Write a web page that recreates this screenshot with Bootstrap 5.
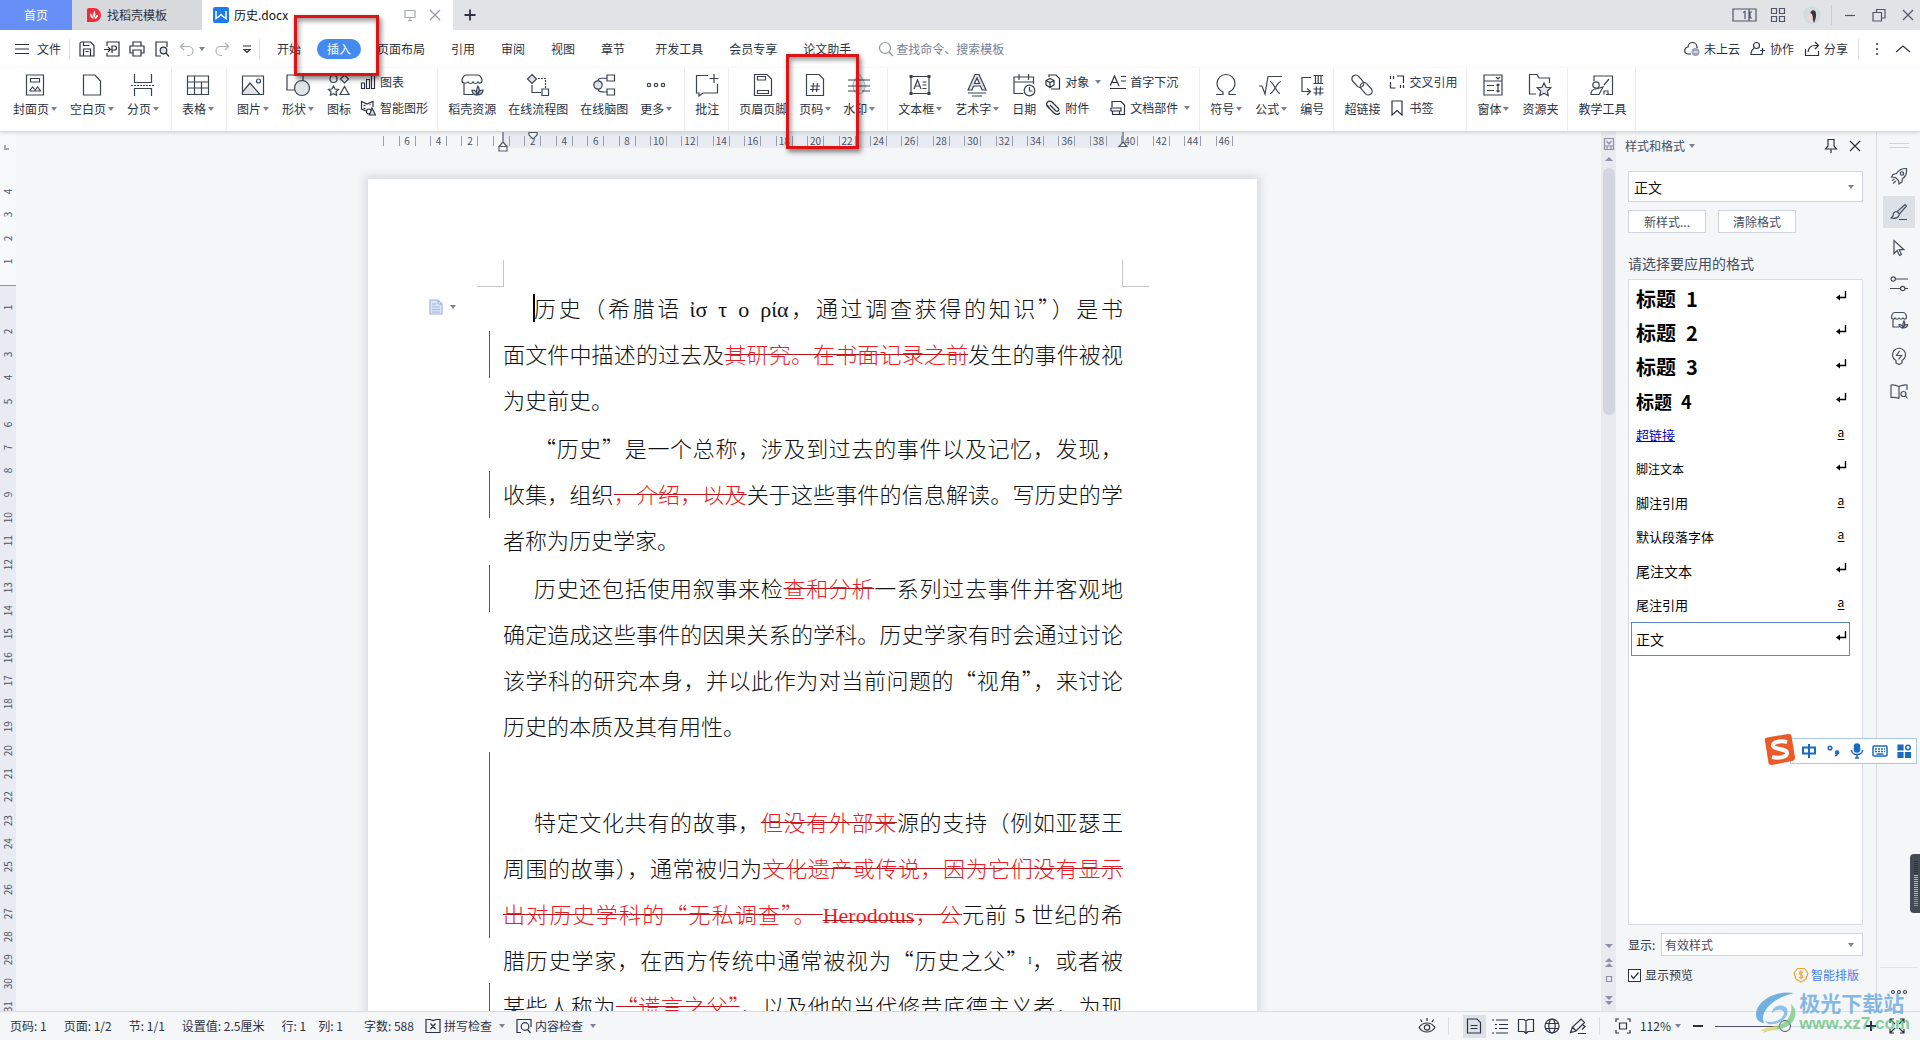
<!DOCTYPE html>
<html lang="zh-CN">
<head>
<meta charset="utf-8">
<meta name="viewport" content="width=device-width, initial-scale=1">
<title>历史.docx</title>
<link href="https://cdn.jsdelivr.net/npm/bootstrap@5.3.0/dist/css/bootstrap.min.css" rel="stylesheet">
<style>
  :root { --ink:#2a3244; --dim:#5d677d; --line:#d9dce2; --pane:#f5f6f8; }
  body { font-family:"Noto Sans CJK SC",sans-serif; font-size:12px; line-height:16px; color:var(--ink); background:var(--pane); height:100vh; overflow:hidden; }
  svg { display:block; flex:none; fill:none; }
  svg:not([stroke]) { stroke:currentColor; }
  svg:not([stroke-width]) { stroke-width:1.2; }
  .i24 { width:24px; height:24px; } .i18 { width:18px; height:18px; } .i16 { width:16px; height:16px; }
  button { background:none; border:0; padding:0; color:inherit; white-space:nowrap; }
  a.plain { color:inherit; text-decoration:none; white-space:nowrap; }
  .tri { display:inline-block; border:3px solid transparent; border-top:4px solid #7b8294; border-bottom:0; flex:none; }
  .vline { width:1px; height:20px; background:#dcdfe5; flex:none; }

  .tabstrip { height:30px; background:#e1e3e7; }
  .tab-home { width:72px; background:#6690f8; color:#fff; }
  .tab-shop { width:130px; background:#d7d9dc; padding-left:14px; gap:5px; }
  .tab-doc { width:251px; background:#fff; padding:0 10px 0 11px; gap:5px; color:#111; }
  .tab-add { width:20px; }
  .win { gap:13px; padding-right:4px; color:#4d576c; }
  .win .vline { margin:0 -3px; background:#c9ccd3; }

  .menubar { height:38px; background:#fff; padding:0 9px 0 15px; }
  .quick { gap:9px; margin-left:9px; }
  .menus { gap:26px; margin-left:17px; }
  .menus .on { background:#438bf0; color:#fff; border-radius:10px; padding:2px 10px; margin:0 -10px; }
  .find { gap:2px; margin-left:27px; color:#8a94a8; }
  .find input { border:0; outline:0; width:140px; padding:0; background:none; color:inherit; }
  .find input::placeholder { color:#75819b; opacity:1; }
  .account { gap:10px; }

  .ribbon { height:64px; background:#fff; border-bottom:1px solid #d8dade; box-shadow:0 1px 3px rgba(60,70,90,.18); z-index:2; padding-left:3px; position:relative; }
  .grp { padding:0 9px 0 10px; gap:13px; border-right:1px solid #edeef1; flex:none; }
  .grp.tight { gap:12px; }
  .grp.wide { padding-right:12px; }
  .big { display:flex; flex-direction:column; align-items:center; gap:4px; padding-top:5px; height:62px; }
  .big svg { color:#3b4252; }
  .big .cap { display:flex; align-items:center; gap:2px; }
  .stack { display:flex; flex-direction:column; padding-top:1px; margin-left:-4px; }
  .stack button { display:flex; align-items:center; height:26px; gap:4px; }
  .stack .tri { margin-left:2px; }

  .vruler { width:16px; flex:none; position:relative; color:#4d5566; background:linear-gradient(#f8f9fb 153px,#8b93a1 153px,#8b93a1 154px,#e8ebf1 154px); font-size:10px; overflow:hidden; }
  .vruler .nums { display:flex; flex-direction:column; height:838px; margin-top:48px; }
  .vruler .corner { position:absolute; left:4px; top:13px; width:5px; height:5px; border:solid #a5aab3; border-width:0 0 2px 2px; }
  .vruler .nums span { flex:1 1 0; display:flex; align-items:center; justify-content:center; writing-mode:vertical-rl; transform:rotate(180deg); line-height:12px; }
  .canvas { padding-left:8px; overflow:hidden; min-width:0; }
  .sheetcol { width:889px; flex:none; }
  .hruler { display:flex; width:880px; height:16px; margin-left:-8px; font-size:10px; line-height:14px; color:#4d5566; background:linear-gradient(90deg,transparent 143px,#e8ebf1 143px,#e8ebf1 762px,transparent 762px); position:relative; }
  .hruler span { flex:1 1 0; display:flex; justify-content:center; }
  .hruler b { font-weight:400; width:17px; height:10px; line-height:9px; margin-top:4px; text-align:center; border:solid #98a0ae; border-width:0 1px; }
  .hruler .edge b { border-left-color:transparent; }
  .mk { position:absolute; width:12px; height:20px; color:#555d6d; }
  .mk.l { left:137px; top:0; } .mk.f { left:167px; top:0; } .mk.r { left:757px; top:0; }
  .hruler svg { fill:#fff; }

  .sheet { background:#fff; margin-top:31px; padding:105px 134px 0 135px; box-shadow:0 0 9px 3px rgba(90,100,120,.2); position:relative; height:1100px; }
  .crop { position:absolute; top:81px; width:27px; height:27px; border:solid #c3c5c9; border-width:0 0 1px 0; }
  .crop.l { left:109px; border-right-width:1px; } .crop.r { right:108px; border-left-width:1px; }
  .pastetip { position:absolute; left:60px; top:120px; display:flex; align-items:center; gap:6px; color:#9db4dc; }
  .doc-par { margin:0 0 2px; min-height:46px; }
  .doc-line { display:block; position:relative; line-height:46px; font-family:"Noto Sans CJK SC",serif; font-weight:300; font-size:22px; color:#111; white-space:nowrap; text-align:justify; text-align-last:justify; }
  .doc-line.first { padding-left:31px; } .doc-line.end { text-align-last:left; }
  .doc-line.chg::before { content:""; position:absolute; left:-14px; top:1px; bottom:-2px; width:1px; background:#c8232c; }
  .doc-line.span5::before { top:-46px; }
  .doc-line i { font-family:"Liberation Serif",serif; font-style:normal; line-height:0; }
  .doc-line sup { font-family:"Liberation Serif",serif; font-size:10px; line-height:0; }
  del { color:#ee1c24; text-decoration:line-through 1px #b8141c; }
  .textcur { position:absolute; left:30px; top:10px; width:2px; height:28px; background:#000; }

  .scroll { width:15px; background:#e8eaef; flex:none; align-items:center; color:#8b92a5; }
  .scroll .thumb { width:12px; height:247px; border-radius:6px; background:#d2d6dd; margin-top:7px; }

  .stylepane { width:261px; flex:none; padding:5px 13px 0 12px; border-right:1px solid var(--line); }
  .stylepane h2 { font-size:12px; line-height:18px; margin:0 0 0 -3px; font-weight:400; color:#434d63; }
  .pick { position:relative; }
  .pick select { width:100%; appearance:none; border:1px solid #d0d4dc; background:#fff; border-radius:0; padding:0 5px; color:#111; display:block; }
  .pick .tri { position:absolute; right:9px; top:50%; margin-top:-2px; }
  .pick.top select { height:31px; font-size:14px; }
  .pick.low select { height:23px; color:#434d63; padding:0 3px; }
  .minor { width:78px; height:23px; background:#fff; border:1px solid #d0d4dc; color:#434d63; }
  .hint { font-size:14px; line-height:20px; margin:20px 0 6px; color:#434d63; }
  .stylebox { border:1px solid #d9dce2; background:#fff; padding:2px 12px 0 2px; color:#000; min-height:0; }
  .stylebox li { height:34px; display:flex; align-items:center; padding:0 2px 0 4px; font-size:13px; border:1px solid transparent; }
  .stylebox li > u, .stylebox li > svg { margin:0 0 7px auto; width:12px; text-align:center; font-size:12px; line-height:12px; text-underline-offset:2px; }
  .stylebox .h { font-weight:700; font-size:20px; line-height:28px; } .stylebox .h4s { font-size:18px; }
  .stylebox .t12 { font-size:12px; } .stylebox .t14 { font-size:14px; }
  .stylebox .sel { border-color:#5b8cc4; }
  .stylebox a { color:#0000c8; }
  .showlab { width:33px; }
  .foot { margin:11px 0 28px; }
  .tickbox { width:13px; height:13px; appearance:none; border:1px solid #2a3244; background:#fff; margin:0; display:block; }
  .tickwrap { position:relative; } .tickwrap svg { position:absolute; left:1px; top:1px; width:11px; height:11px; pointer-events:none; }
  .smart { color:#4a7df0 !important; gap:2px; }

  .tools { width:43px; flex:none; align-items:center; padding-top:11px; color:#434d60; }
  .tools button { width:32px; height:32px; margin-bottom:4px; display:flex; align-items:center; justify-content:center; flex:none; }
  .tools .on { background:#dce0e7; }
  .grip { width:20px; height:5px; border:solid #cfd3da; border-width:1px 0; margin-bottom:12px; flex:none; }
  .toolend { width:38px; height:22px; flex:none; }

  .statusbar { height:29px; flex:none; border-top:1px solid var(--line); background:#f5f6f8; padding:0 14px 0 10px; z-index:2; }
  .counts { gap:17px; }
  .check { gap:3px; margin-left:11px; }
  .modes { gap:8px; } .modes .on { background:#dce0e7; }
  .modes button { height:23px; padding:0 3px; display:flex; align-items:center; width:23px; justify-content:center; margin-right:-5px; }
  .modes .vline { height:18px; margin:0 6px; }
  .zoomer { appearance:none; width:143px; height:16px; background:linear-gradient(90deg,#4a5266 50%,#d3d6dc 50%) center/100% 1px no-repeat; margin:0; }
  .zoomer::-webkit-slider-thumb { appearance:none; width:12px; height:12px; border-radius:50%; border:1px solid #4a5266; background:#f5f6f8; }

  .redbox { position:absolute; border:3px solid #dd1414; box-shadow:2px 3px 5px rgba(0,0,0,.5), inset 2px 3px 5px rgba(0,0,0,.4); z-index:5; pointer-events:none; }
  .redbox.a { left:294px; top:15px; width:85px; height:61px; }
  .redbox.b { left:786px; top:54px; width:73px; height:95px; }
  .ime { position:absolute; right:3px; top:738px; width:127px; height:26px; background:#fff; border:1px solid #a9c8ea; z-index:5; padding:0 4px 0 10px; justify-content:space-between; color:#1a6bc0; }
  .ime .logo { position:absolute; left:-29px; top:-6px; width:34px; height:34px; }
  .meter { position:absolute; right:0; top:854px; width:10px; height:59px; border-radius:4px 0 0 4px; background:#454a57; z-index:5; padding:7px 2px 0 4px; }
  .meter i { display:block; height:46px; background:repeating-linear-gradient(transparent 0 1px,#454a57 1px 2px),linear-gradient(#2b3148 14px,#c9c93a 14px,#b7c94b 34px,#4cc0a8 36px); }
  .mark-site { position:absolute; right:10px; bottom:6px; z-index:6; gap:2px; pointer-events:none; opacity:.72; }
  .mark-site b { display:block; font-size:21px; line-height:24px; color:#5aa2dc; }
  .mark-site em { display:block; font:bold 17px/20px "Liberation Sans",sans-serif; color:#5cc07a; }
</style>
<script src="https://cdn.jsdelivr.net/npm/bootstrap@5.3.0/dist/js/bootstrap.bundle.min.js"></script>
</head>
<body class="d-flex flex-column position-relative">

<header class="flex-shrink-0">
  <div class="tabstrip d-flex align-items-stretch">
    <button class="tab-home">首页</button>
    <button class="tab-shop d-flex align-items-center">
      <svg class="i16" viewBox="0 0 16 16" stroke="none"><path d="M1 3a2 2 0 0 1 2-2h5a7 7 0 0 1 0 14H1z" fill="#ee2c3c"/><path d="M7.500 12C4.500 11 4 9 4.200 6.500 6 7.500 7.200 9 7.500 12zM8 11.500C6.500 8.500 7 6 8.500 3.500 9.800 6 9.800 8.500 8 11.500zM8.700 12c.2-2.500 1.500-4 3.600-4.500C12 10 11 11.500 8.700 12z" fill="#fff"/></svg>找稻壳模板</button>
    <div class="tab-doc d-flex align-items-center">
      <svg class="i16" viewBox="0 0 16 16" stroke="none"><rect width="16" height="16" rx="2" fill="#1a7df0"/><path d="M3 4v7.500l3.500-2.500L8 7.500l1.500 1.500L13 11.500V4" stroke="#fff" stroke-width="1.500"/></svg>
      <span class="me-auto">历史.docx</span>
      <button aria-label="窗口"><svg class="i16 me-1" viewBox="0 0 16 16" stroke="#a4a9b4"><path d="M3 3.500h10v7H3zM8 10.500v3M6 13.500h4"/></svg></button>
      <button aria-label="关闭"><svg class="i16" viewBox="0 0 16 16" stroke="#9298a5"><path d="M3 3l10 10M13 3L3 13"/></svg></button>
    </div>
    <button class="tab-add ms-2" aria-label="新建"><svg class="i18" viewBox="0 0 18 18" stroke-width="1.800"><path d="M9 3.500v11M3.500 9h11"/></svg></button>
    <div class="win d-flex align-items-center ms-auto">
      <svg width="25" height="16" viewBox="0 0 25 16"><path d="M1 2h23v12H1zM17 2v12M11 5.500l2-1V12M20 5h-2v6h2"/></svg>
      <svg class="i16" viewBox="0 0 16 16"><path d="M1.500 1.500h5v5h-5zM9.500 1.500h5v5h-5zM1.500 9.500h5v5h-5zM9.500 9.500h5v5h-5z"/></svg>
      <svg class="i18 ms-1" viewBox="0 0 18 18" stroke="none"><circle cx="9" cy="9" r="9" fill="#d2dcdf"/><path d="M7 9c0-4 3-6 5-4 2 3 1 8-1 12-1-3-1-5-3-6l-3 2z" fill="#3e3238"/><path d="M7 7l2 1 1 4-3 3-3-1z" fill="#f0d8cf"/></svg>
      <span class="vline"></span>
      <button aria-label="最小化"><svg class="i16" viewBox="0 0 16 16"><path d="M3 8.500h10"/></svg></button>
      <button aria-label="还原"><svg class="i16" viewBox="0 0 16 16"><path d="M2 5.500h8.500V14H2zM5.500 5.500V2.500H14V11h-3.500"/></svg></button>
      <button aria-label="关闭窗口"><svg class="i16" viewBox="0 0 16 16"><path d="M3 3l10 10M13 3L3 13"/></svg></button>
    </div>
  </div>

  <nav class="menubar d-flex align-items-center">
    <button class="d-flex align-items-center gap-2"><svg width="14" height="16" viewBox="0 0 14 16"><path d="M0 3.500h14M0 8h14M0 12.500h14"/></svg>文件</button>
    <span class="vline ms-2"></span>
    <div class="quick d-flex align-items-center">
      <button aria-label="保存"><svg class="i16" viewBox="0 0 16 16"><path d="M1 2.500q0-1.500 1.500-1.500h9L15 4.500V15H1zM4.500 15V8h7v7M4.500 1v3.500h6M6.500 10.500h3"/></svg></button>
      <button aria-label="输出"><svg class="i16" viewBox="0 0 16 16"><path d="M3 5V1h12v14H3v-3M0 8.500h6M4 6l2.500 2.500L4 11M8 12V5h2.500a2 2 0 0 1 0 4H8"/></svg></button>
      <button aria-label="打印"><svg class="i16" viewBox="0 0 16 16"><path d="M4 5V1h8v4M4 12H1V5h14v7h-3M4 9h8v6H4z"/></svg></button>
      <button aria-label="预览"><svg class="i16" viewBox="0 0 16 16"><path d="M7 15H2V1h11v5"/><circle cx="9.500" cy="9.500" r="3.300" fill="#dfe3ea"/><path d="M12 12l3 3.500"/></svg></button>
      <button class="d-flex align-items-center gap-1" aria-label="撤销"><svg class="i16" viewBox="0 0 16 16" stroke="#aab0bb"><path d="M5 2L1.500 5.500 5 9M2 5.500h7.500a4.500 4.500 0 0 1 0 9H8"/></svg><span class="tri"></span></button>
      <button aria-label="恢复"><svg class="i16" viewBox="0 0 16 16" stroke="#aab0bb"><path d="M11 2l3.500 3.500L11 9M14 5.500H6.500a4.500 4.500 0 0 0 0 9H8"/></svg></button>
      <button aria-label="更多"><svg class="i16" viewBox="0 0 16 16"><path d="M4 5h8M5 8.500l3 3 3-3z"/></svg></button>
    </div>
    <span class="vline ms-1"></span>
    <div class="menus d-flex align-items-center">
      <a class="plain" href="#">开始</a><a class="plain on" href="#">插入</a><a class="plain" href="#">页面布局</a><a class="plain" href="#">引用</a><a class="plain" href="#">审阅</a><a class="plain" href="#">视图</a><a class="plain" href="#">章节</a><a class="plain ms-1" href="#">开发工具</a><a class="plain" href="#">会员专享</a><a class="plain" href="#">论文助手</a>
    </div>
    <label class="find d-flex align-items-center"><svg class="i16" viewBox="0 0 16 16"><circle cx="7" cy="7" r="5.500"/><path d="M11 11l4 4"/></svg><input type="text" placeholder="查找命令、搜索模板" aria-label="查找"></label>
    <div class="account d-flex align-items-center ms-auto">
      <button class="d-flex align-items-center gap-1"><svg class="i16" viewBox="0 0 16 16"><path d="M7 13H4.500a3.500 3.500 0 0 1-.5-7 4.500 4.500 0 0 1 9 0v1"/><circle cx="11.500" cy="11" r="4" fill="#9aa3b8" stroke="none"/><path d="M9.500 11h4" stroke="#fff"/></svg>未上云</button>
      <button class="d-flex align-items-center gap-1"><svg class="i16" viewBox="0 0 16 16"><circle cx="6.500" cy="4.500" r="3"/><path d="M4 7.500C2 8.500 1 10 1 13.500h11V12M10 9.500h5M12.500 7v5"/></svg>协作</button>
      <button class="d-flex align-items-center gap-1"><svg class="i16" viewBox="0 0 16 16"><path d="M1.500 8v6.500h13V10M4 11c.5-4 3-6.500 7-6.500H14M11 1l3.500 3.500L11 8"/></svg>分享</button>
      <span class="vline"></span>
      <svg class="i16" viewBox="0 0 16 16" stroke="none"><path fill="#5d677d" d="M7 2h2v2H7zM7 7h2v2H7zM7 12h2v2H7z"/></svg>
      <button aria-label="收起"><svg class="i16" viewBox="0 0 16 16"><path d="M1 11l7-6 7 6"/></svg></button>
    </div>
  </nav>

  <div class="ribbon d-flex">
    <div class="grp wide d-flex">
      <button class="big"><svg class="i24" viewBox="0 0 24 24"><path d="M3.500 2h17v20h-17zM7.500 5.500h9V9h-9zM6.500 18l3-4 2 2.500M11.500 18l3-4 3 4zM6.500 18h5"/></svg><span class="cap">封面页<i class="tri"></i></span></button>
      <button class="big"><svg class="i24" viewBox="0 0 24 24"><path d="M3.500 2H15l5.500 6v14h-17z"/></svg><span class="cap">空白页<i class="tri"></i></span></button>
      <button class="big"><svg class="i24" viewBox="0 0 24 24"><path d="M3.500 1v8.500h17V1M3.500 23v-7.500h17V23"/><path d="M0 12.500h24" stroke-dasharray="2 1"/></svg><span class="cap">分页<i class="tri"></i></span></button>
    </div>
    <div class="grp wide d-flex">
      <button class="big"><svg class="i24" viewBox="0 0 24 24"><path d="M1.500 3h21v18.500h-21zM1.500 9h21M1.500 15h21M8.500 3v18.500M15.500 9v12.500"/></svg><span class="cap">表格<i class="tri"></i></span></button>
    </div>
    <div class="grp d-flex">
      <button class="big"><svg class="i24" viewBox="0 0 24 24"><path d="M1.500 3h21v18.500h-21z"/><path d="M1.500 19L9 10l10 11.500H1.500z" fill="#e1e3e7"/><circle cx="17.500" cy="8" r="2"/></svg><span class="cap">图片<i class="tri"></i></span></button>
      <button class="big"><svg class="i24" viewBox="0 0 24 24"><path d="M1 2h16v15H1z"/><circle cx="16" cy="15" r="7.500" fill="#e1e3e7"/></svg><span class="cap">形状<i class="tri"></i></span></button>
      <button class="big"><svg class="i24" viewBox="0 0 24 24"><circle cx="6.500" cy="6" r="3.500"/><path d="M17.500 2l4 4-4 4-4-4zM6.500 13l1.500 3 3.500.5-2.500 2.300.6 3.400-3.100-1.600-3.100 1.600.6-3.400L1.500 16.500 5 16zM17.500 13.500l4.500 8h-9z"/></svg><span class="cap">图标</span></button>
      <div class="stack">
        <button><svg class="i16" viewBox="0 0 16 16"><path d="M1.500 9h3v5.500h-3zM6.500 5.500h3v9h-3zM11.500 1.500h3v13h-3z"/></svg>图表</button>
        <button><svg class="i16" viewBox="0 0 16 16"><path d="M6 11L1.500 9V1.500L7 4l6-2.500V7M3.500 5l2 1M3.500 8l2 1M9.500 5l1-.5"/><circle cx="9" cy="11.500" r="2.500"/><path d="M12 8l3.500 7h-6z" fill="#dfe3ea"/></svg>智能图形</button>
      </div>
    </div>
    <div class="grp wide tight d-flex">
      <button class="big"><svg class="i24" viewBox="0 0 24 24"><path d="M4 11v10.500h9M2 8c0-3 2-6 4-6h12c2 0 4 3 4 6 0 2-3 3-4 1-1 2-4 2-5 0-1 2-4 2-5 0-1.500 2-6 1.500-6-1z"/><path d="M17 22c-1-3-1-5 1-9 2 3 2 6-1 9zM17 22c-3 0-5-2-5-5 3 0 5 2 5 5zM17 22c1-4 3-5 6-5 0 3-2 5-6 5z" fill="#bfc5cf"/></svg><span class="cap">稻壳资源</span></button>
      <button class="big"><svg class="i24" viewBox="0 0 24 24"><path d="M6 1.500L10.500 6 6 10.500 1.500 6z" fill="#dfe3ea"/><path d="M16 16h6.500v6.500H16zM6 12v7.500h9"/><path d="M12 5.500h7.500V15" stroke-dasharray="2 1"/></svg><span class="cap">在线流程图</span></button>
      <button class="big"><svg class="i24" viewBox="0 0 24 24"><path d="M15 2h7.500v6H15zM15 16h7.500v6H15zM15 5C5 5 6 7 6 8M15 19c-8 0-9-1-9-3.500"/><circle cx="6" cy="12" r="4.200" fill="#dfe3ea"/></svg><span class="cap">在线脑图</span></button>
      <button class="big"><svg class="i24" viewBox="0 0 24 24"><circle cx="5" cy="12" r="1.700"/><circle cx="12" cy="12" r="1.700"/><circle cx="19" cy="12" r="1.700"/></svg><span class="cap">更多<i class="tri"></i></span></button>
    </div>
    <div class="grp d-flex">
      <button class="big"><svg class="i24" viewBox="0 0 24 24"><path d="M13 2.500H1.500V20H4v3l4-3h14.500V11M19 1v9M14.500 5.500h9"/></svg><span class="cap">批注</span></button>
    </div>
    <div class="grp wide tight d-flex">
      <button class="big"><svg class="i24" viewBox="0 0 24 24"><path d="M3.500 1.500H16L20.500 6v16.500h-17zM6.500 3.500h8V7h-8zM6.500 17.500h11v3h-11z"/></svg><span class="cap">页眉页脚</span></button>
      <button class="big"><svg class="i24" viewBox="0 0 24 24"><path d="M3.500 1.500H16L20.500 6v16.500h-17zM10.500 10l-1 9M14.500 10l-1 9M7.500 13h9.500M7 16.500h9.500"/></svg><span class="cap">页码<i class="tri"></i></span></button>
      <button class="big"><svg class="i24" viewBox="0 0 24 24"><path d="M12 1c3 4 6 7 6 12a6 8 0 0 1-12 0c0-5 3-8 6-12z" stroke="#b9bec8" fill="#eceef2"/><path d="M1 7h22M1 13h22M1 18h8M15 18h8"/></svg><span class="cap">水印<i class="tri"></i></span></button>
    </div>
    <div class="grp d-flex">
      <button class="big"><svg class="i24" viewBox="0 0 24 24"><path d="M3 3.500h18v17H3zM6 16l3.500-9 3.500 9M7 13h5M14.500 9h4M14.500 12h4M14.500 15.500h4"/><path d="M1.500 2h3v3h-3zM19.500 2h3v3h-3zM1.500 19h3v3h-3zM19.500 19h3v3h-3z" fill="#3b4252" stroke="none"/></svg><span class="cap">文本框<i class="tri"></i></span></button>
      <button class="big"><svg class="i24" viewBox="0 0 24 24"><path d="M3 17L10 1.500h4L21 17h-4l-1.500-4h-7L7 17zM9.500 10.500h5L12 5z" fill="#dfe3ea"/><path d="M3 20h18M7 23h10"/></svg><span class="cap">艺术字<i class="tri"></i></span></button>
      <button class="big"><svg class="i24" viewBox="0 0 24 24"><path d="M11 20.500H2V4h19.500v7M2 9h19.500M7 1v6M16.500 1v6"/><circle cx="17.500" cy="17.500" r="5.300"/><path d="M17.500 14v4h3"/></svg><span class="cap">日期</span></button>
      <div class="stack">
        <button><svg class="i16" viewBox="0 0 16 16"><path d="M4 3V1h7l3.500 3.500V15H6"/><path d="M5 4.500l4 2v4.500l-4 2.500-4-2.500V6.500zM1 6.500l4 2 4-2M5 8.500v5"/></svg>对象<i class="tri"></i></button>
        <button><svg class="i16" viewBox="0 0 16 16"><path d="M5 5l6 6a1.800 1.800 0 0 0 2.500-2.500L7 2A3 3 0 0 0 2.500 6.500L9 13a4 4 0 0 0 6 0M4.500 8L2 5"/></svg>附件</button>
      </div>
      <div class="stack">
        <button><svg class="i16" viewBox="0 0 16 16"><path d="M0 12L4.500 2 9 12M2 8.500h5.500M11 2.500h5M11 7h5M0 14.500h16"/></svg>首字下沉</button>
        <button><svg class="i16" viewBox="0 0 16 16"><path d="M2 7V1.500h9L14.500 5v9.500h-5M1 8h10v3H1zM2.500 11v3.500h7V11"/></svg>文档部件<i class="tri"></i></button>
      </div>
    </div>
    <div class="grp d-flex">
      <button class="big"><svg class="i24" viewBox="0 0 24 24"><path d="M2 21.500h7V19C5 17 3 14 3 10.500a9 9 0 0 1 18 0C21 14 19 17 15 19v2.500h7"/></svg><span class="cap">符号<i class="tri"></i></span></button>
      <button class="big"><svg class="i24" viewBox="0 0 24 24"><path d="M0 13l3 0 3 8L9 3.500h14M11 8.500c3 0 7 12 10 12M22 8.500c-4 0-7 12-11 12"/></svg><span class="cap">公式<i class="tri"></i></span></button>
      <button class="big"><svg class="i24" viewBox="0 0 24 24"><path d="M11 4.500H2V18.500h8M7 15.500l3.500 3L7 22M13.500 2.500H23M13.500 10.500H23M15.500 2.500v8M18.200 2.500v8M21 2.500v8M16.500 13.500l-.5 9M20.500 13.500l-.5 9M13.500 16h10M13.500 20h10"/></svg><span class="cap">编号</span></button>
    </div>
    <div class="grp d-flex">
      <button class="big"><svg class="i24" viewBox="0 0 24 24"><rect x="1" y="4.500" width="14" height="7.500" rx="3.700" transform="rotate(48 8 8)"/><rect x="9" y="12" width="14" height="7.500" rx="3.700" transform="rotate(48 16 16)"/></svg><span class="cap">超链接</span></button>
      <div class="stack">
        <button><svg class="i16" viewBox="0 0 16 16"><path d="M1.500 2v3M4.500 2v3M1.500 8v6h5M8 2h6.500v7M11.500 11v3M14.500 11v3"/></svg>交叉引用</button>
        <button><svg class="i16" viewBox="0 0 16 16"><path d="M3 1h10v14l-5-4.500L3 15z"/></svg>书签</button>
      </div>
    </div>
    <div class="grp d-flex">
      <button class="big"><svg class="i24" viewBox="0 0 24 24"><path d="M3 2h18v6H3zM3 8h18v14H3zM15 4l2 2 2-2M6 12.500h7M6 17.500h7M17 11v8M15.500 12.500L17 11l1.500 1.500M15.500 17.500L17 19l1.500-1.500"/></svg><span class="cap">窗体<i class="tri"></i></span></button>
      <button class="big"><svg class="i24" viewBox="0 0 24 24"><path d="M8 21H1.500V1.500H9L11 5h10.500v5"/><path d="M16 10l2 4.300 4.800.5-3.500 3.200 1 4.700-4.300-2.400-4.300 2.400 1-4.700-3.500-3.200 4.800-.5z" fill="#e7e9ed"/></svg><span class="cap">资源夹</span></button>
    </div>
    <div class="grp d-flex">
      <button class="big"><svg class="i24" viewBox="0 0 24 24"><path d="M4 8V3h18.500v18.500H16M14 12l5-6"/><circle cx="6" cy="12" r="3.200"/><path d="M1 21.500c0-4 2-5.500 5-5.500l7-2-4 7.500zM14 21.500V18h4v3.500"/></svg><span class="cap">教学工具</span></button>
    </div>
  </div>
</header>

<main class="d-flex flex-grow-1 overflow-hidden">
  <div class="vruler"><span class="corner"></span><div class="nums" id="vnums"></div></div>

  <section class="canvas flex-grow-1 d-flex justify-content-center">
    <div class="sheetcol">
      <div class="hruler" id="hnums">
        <svg class="mk l" viewBox="0 0 12 20"><path d="M6 0v10M2 14.500L6 10l4 4.500zM2 14.500h8V19H2z"/></svg>
        <svg class="mk f" viewBox="0 0 12 20"><path d="M2 .5h8V3L6 7 2 3z"/></svg>
        <svg class="mk r" viewBox="0 0 12 20"><path d="M6 0v10M2 14.500L6 10l4 4.500z"/></svg>
      </div>
      <article class="sheet">
        <span class="crop l"></span><span class="crop r"></span>
        <span class="pastetip"><svg class="i16" viewBox="0 0 16 16"><path d="M2 1h8l4 4v10H2zM10 1v4h4M4 5h4M4 8h8M4 10.500h8M4 13h8" fill="#dde6f6"/></svg><i class="tri"></i></span>
        <p class="doc-par"><span class="doc-line first"><span class="textcur"></span>历史（希腊语 <i>ἰσ&ensp;τ&ensp;ο&ensp;ρία</i>，通过调查获得的知识”）是书</span><span class="doc-line chg">面文件中描述的过去及<del>其研究。在书面记录之前</del>发生的事件被视</span><span class="doc-line end">为史前史。</span></p>
        <p class="doc-par"><span class="doc-line first">“历史”是一个总称，涉及到过去的事件以及记忆，发现，</span><span class="doc-line chg">收集，组织<del>，介绍，以及</del>关于这些事件的信息解读。写历史的学</span><span class="doc-line end">者称为历史学家。</span></p>
        <p class="doc-par"><span class="doc-line first chg">历史还包括使用叙事来检<del>查和分析</del>一系列过去事件并客观地</span><span class="doc-line">确定造成这些事件的因果关系的学科。历史学家有时会通过讨论</span><span class="doc-line">该学科的研究本身，并以此作为对当前问题的“视角”，来讨论</span><span class="doc-line end">历史的本质及其有用性。</span></p>
        <p class="doc-par"></p>
        <p class="doc-par"><span class="doc-line first chg span5">特定文化共有的故事，<del>但没有外部来</del>源的支持（例如亚瑟王</span><span class="doc-line chg">周围的故事），通常被归为<del>文化遗产或传说，因为它们没有显示</del></span><span class="doc-line chg"><del>出对历史学科的“无私调查”。 <i>Herodotus</i>，公</del>元前 <i>5</i> 世纪的希</span><span class="doc-line">腊历史学家，在西方传统中通常被视为“历史之父”<sup>I</sup>，或者被</span><span class="doc-line chg">某些人称为<del>“谎言之父”</del>，以及他的当代修昔底德主义者，为现</span></p>
      </article>
    </div>
  </section>

  <div class="scroll d-flex flex-column">
    <svg class="i16 mt-1" viewBox="0 0 16 16"><path d="M3.500 2.500h9v11h-9zM3.500 10h9M6 10v3M10 10v3M5.500 5l2.500 3 2.500-3"/></svg>
    <svg width="8" height="5" class="mt-1" viewBox="0 0 8 5"><path d="M0 5l4-4 4 4z" fill="currentColor" stroke="none"/></svg>
    <span class="thumb"></span>
    <svg class="mt-auto" width="10" height="75" viewBox="0 0 10 75"><path d="M1 8h8L5 12zM1 26l4-4 4 4zM1 31l4-4 4 4zM1 60h8l-4 4zM1 65h8l-4 4z" fill="currentColor" stroke="none"/><path d="M2.500 40.500h5v5h-5z"/></svg>
  </div>

  <aside class="stylepane d-flex flex-column">
    <div class="d-flex align-items-center">
      <h2 class="d-flex align-items-center gap-1">样式和格式<i class="tri"></i></h2>
      <button class="ms-auto me-2" aria-label="固定"><svg class="i16" viewBox="0 0 16 16"><path d="M5 1.500h6V8l2.500 3H2.500L5 8zM8 11v4"/></svg></button>
      <button class="me-n1" aria-label="关闭面板"><svg class="i16" viewBox="0 0 16 16"><path d="M3 3l10 10M13 3L3 13"/></svg></button>
    </div>
    <div class="pick top mt-3"><select aria-label="当前样式"><option>正文</option></select><i class="tri"></i></div>
    <div class="d-flex gap-2 mt-2"><button class="minor me-1">新样式...</button><button class="minor">清除格式</button></div>
    <div class="hint">请选择要应用的格式</div>
    <ul class="stylebox list-unstyled flex-grow-1 mb-2">
      <li><span class="h">标题&ensp;1</span><svg width="12" height="12" viewBox="0 0 12 12"><path d="M10.500 1v6.500H3" stroke-width="1.400"/><path d="M1 7.500L5 4.500v6z" fill="currentColor" stroke="none"/></svg></li>
      <li><span class="h">标题&ensp;2</span><svg width="12" height="12" viewBox="0 0 12 12"><path d="M10.500 1v6.500H3" stroke-width="1.400"/><path d="M1 7.500L5 4.500v6z" fill="currentColor" stroke="none"/></svg></li>
      <li><span class="h">标题&ensp;3</span><svg width="12" height="12" viewBox="0 0 12 12"><path d="M10.500 1v6.500H3" stroke-width="1.400"/><path d="M1 7.500L5 4.500v6z" fill="currentColor" stroke="none"/></svg></li>
      <li><span class="h h4s">标题&ensp;4</span><svg width="12" height="12" viewBox="0 0 12 12"><path d="M10.500 1v6.500H3" stroke-width="1.400"/><path d="M1 7.500L5 4.500v6z" fill="currentColor" stroke="none"/></svg></li>
      <li><a href="#">超链接</a><u>a</u></li>
      <li class="t12"><span>脚注文本</span><svg width="12" height="12" viewBox="0 0 12 12"><path d="M10.500 1v6.500H3" stroke-width="1.400"/><path d="M1 7.500L5 4.500v6z" fill="currentColor" stroke="none"/></svg></li>
      <li><span>脚注引用</span><u>a</u></li>
      <li><span>默认段落字体</span><u>a</u></li>
      <li class="t14"><span>尾注文本</span><svg width="12" height="12" viewBox="0 0 12 12"><path d="M10.500 1v6.500H3" stroke-width="1.400"/><path d="M1 7.500L5 4.500v6z" fill="currentColor" stroke="none"/></svg></li>
      <li><span>尾注引用</span><u>a</u></li>
      <li class="t14 sel"><span>正文</span><svg width="12" height="12" viewBox="0 0 12 12"><path d="M10.500 1v6.500H3" stroke-width="1.400"/><path d="M1 7.500L5 4.500v6z" fill="currentColor" stroke="none"/></svg></li>
    </ul>
    <div class="d-flex align-items-center"><label for="show" class="showlab">显示:</label><div class="pick low flex-grow-1"><select id="show"><option>有效样式</option></select><i class="tri"></i></div></div>
    <div class="foot d-flex align-items-center">
      <span class="tickwrap me-1"><input class="tickbox" type="checkbox" id="prev" checked><svg viewBox="0 0 11 11"><path d="M2 5.500l2.500 3L9.500 2.500"/></svg></span><label for="prev">显示预览</label>
      <a class="plain smart d-flex align-items-center ms-auto me-1" href="#"><svg class="i16" viewBox="0 0 16 16" stroke="#efa63c"><path d="M4.500 1.500h7L15 6l-2 6-5 3-5-3-2-6z"/><path d="M10 5.500C8 4 6 5 6.500 6.500S10 8 9.700 9.700 7 11 6 10M8 3.500v9"/></svg>智能排版</a>
    </div>
  </aside>

  <div class="tools d-flex flex-column">
    <span class="grip"></span>
    <button aria-label="火箭"><svg class="i18" viewBox="0 0 18 18"><path d="M16.500 1.500c-5 0-8 1.500-10 5L3 7.500 1.500 10l4 .5 3 3 .5 3.500 3-2 .5-3.500c3.500-2 4.500-5 4-10zM2 13.500L4.500 12M3 16.500l3-2.500"/><circle cx="12" cy="6.500" r="1.700"/></svg></button>
    <button class="on" aria-label="样式"><svg class="i18" viewBox="0 0 18 18"><path d="M15 1.500l1.500 1.500-7 8-2.500-2.200zM7 8.500c-3 0-4 2-4 4.500l-2 2c4 1 8 0 8.500-4M9 16.500h8"/></svg></button>
    <button aria-label="选择"><svg class="i18" viewBox="0 0 18 18"><path d="M4 1.500v13l3.200-3 2.300 5 2-1-2.300-4.800H14z"/></svg></button>
    <button aria-label="调整"><svg class="i18" viewBox="0 0 18 18"><path d="M5.500 4H18M0 13.500h10.500M15 13.500h3"/><circle cx="3.200" cy="4" r="2.200"/><circle cx="12.700" cy="13.500" r="2.200"/></svg></button>
    <button aria-label="资源"><svg class="i18" viewBox="0 0 18 18"><path d="M3 9v7h6M1.500 6.500C1.500 4 3 1.500 4.500 1.500h9c1.500 0 3 2.500 3 5 0 2-2.500 2-3.500.5-1 1.500-3 1.500-4 0-1 1.500-3 1.500-4 0C4 9 1.500 8.500 1.500 6.500z"/><path d="M13 17c-1-3 0-5 1-7 1 2 1.500 4-1 7zM13 17c-2.500 0-4-2-4-3.500 2 0 4 1 4 3.500zM13 17c.5-2.500 2-3.500 4.500-3.500C17.500 16 15.500 17 13 17z" fill="#bfc5cf"/></svg></button>
    <button aria-label="灵感"><svg class="i18" viewBox="0 0 18 18"><path d="M6 13.500a6.500 6.500 0 1 1 6 0v2.500L9 17.500 6 16zM9.500 4L6.500 8.500h5L8.500 12.500"/></svg></button>
    <button aria-label="阅读"><svg class="i18" viewBox="0 0 18 18"><path d="M9 3.500v12M9 15.500c-2-1-5-1.500-8-1V2c3-.5 6 .5 8 1.500 2-1 5-2 8-1.500v5"/><circle cx="13.500" cy="11" r="2.500"/><path d="M15.500 13l2 2.500"/></svg></button>
    <span class="toolend mt-auto border-top"></span>
    <svg class="mb-3" width="18" height="6" viewBox="0 0 18 6"><circle cx="3" cy="3" r="1.500"/><circle cx="9" cy="3" r="1.500"/><circle cx="15" cy="3" r="1.500"/></svg>
  </div>
</main>

<footer class="statusbar d-flex align-items-center text-nowrap">
  <div class="counts d-flex align-items-center">
    <span>页码: 1</span><span>页面: 1/2</span><span>节: 1/1</span><span>设置值: 2.5厘米</span><span>行: 1&ensp;&ensp;列: 1</span><span class="ms-1">字数: 588</span>
  </div>
  <button class="check d-flex align-items-center"><svg class="i16" viewBox="0 0 16 16"><path d="M5 1.500H1v13h4M11 1.500h4v13h-4M5.500 5.500l5 5.500M10.500 5.500l-5 5.500M5 1.500l3 1 3-1M5 14.500h6"/></svg>拼写检查<i class="tri ms-1"></i></button>
  <button class="check d-flex align-items-center"><svg class="i16" viewBox="0 0 16 16"><path d="M4 1.500H1v13h4M11 1.500h4V9"/><circle cx="9" cy="8.500" r="3.800"/><path d="M11.500 11.500l3 3.500M4 1.500h7"/></svg>内容检查<i class="tri ms-1"></i></button>
  <div class="modes d-flex align-items-center ms-auto">
    <button aria-label="护眼"><svg class="i18" viewBox="0 0 18 18"><path d="M1 10.500c4-6 12-6 16 0-4 6-12 6-16 0zM9 4V1M4 5L2.500 2.500M14 5l1.500-2.500"/><circle cx="9" cy="10.500" r="2.700"/></svg></button>
    <span class="vline"></span>
    <button class="on" aria-label="页面视图"><svg class="i18" viewBox="0 0 18 18"><path d="M2.500 2h9.500l3.500 3.500V16h-13zM5.500 8.500h7M5.500 11.500h7"/></svg></button>
    <button aria-label="大纲"><svg class="i18" viewBox="0 0 18 18"><path d="M1 3h2M5 3h12M4 7.500h2M8 7.500h9M4 11.500h2M8 11.500h9M1 16h2M5 16h12"/></svg></button>
    <button aria-label="阅读版式"><svg class="i18" viewBox="0 0 18 18"><path d="M1.500 2.500H7l2 1.500 2-1.500h5.500v12H11l-2 2-2-2H1.500zM9 4v12"/></svg></button>
    <button aria-label="Web 版式"><svg class="i18" viewBox="0 0 18 18"><circle cx="9" cy="9" r="7"/><ellipse cx="9" cy="9" rx="3.200" ry="7"/><path d="M2.500 6.500h13M2.500 11.500h13"/></svg></button>
    <button aria-label="写作模式"><svg class="i18" viewBox="0 0 18 18"><path d="M1.500 15.500L3.500 10 12 2l3.500 3.500L7 14zM3.500 10L7 14M9 16.500h8M14 8l2 1.500-3 3"/></svg></button>
    <span class="vline"></span>
  </div>
  <svg class="i18 ms-2 me-2" viewBox="0 0 18 18"><path d="M5 2H2v3M13 2h3v3M5 16H2v-3M13 16h3v-3M5.500 6h7v6h-7z"/></svg>
  <button class="d-flex align-items-center gap-1">112%<i class="tri"></i></button>
  <button class="ms-2" aria-label="缩小"><svg class="i18" viewBox="0 0 18 18" stroke-width="2"><path d="M4 9h10"/></svg></button>
  <input class="zoomer ms-2" type="range" min="0" max="100" value="49" aria-label="缩放">
  <button class="ms-1 me-2" aria-label="放大"><svg class="i18" viewBox="0 0 18 18" stroke-width="2"><path d="M4 9h10M9 4v10"/></svg></button>
  <button aria-label="全屏"><svg class="i18" viewBox="0 0 18 18"><path d="M6 2H2v4M2 2l5 5M12 2h4v4M16 2l-5 5M6 16H2v-4M2 16l5-5M12 16h4v-4M16 16l-5-5"/></svg></button>
</footer>

<span class="redbox a"></span>
<span class="redbox b"></span>
<div class="ime d-flex align-items-center">
  <svg class="logo" viewBox="0 0 34 34" stroke="none"><path d="M3 8q-1-3 2-3.500L26 1q3-.5 3.500 2L33 24q.5 3-2.500 4L10 32q-3 .5-3.500-2z" fill="#ec5a2a"/><path d="M25 9c-6-1.500-14-.5-14 3.500s14 3 14 7.500-9 5.500-15 4" stroke="#fff" stroke-width="4" fill="none"/></svg>
  <svg class="i16" viewBox="0 0 16 16" stroke-width="2"><path d="M2 4.500h12v6H2zM8 1v14"/></svg>
  <svg class="i16" viewBox="0 0 16 16" stroke-width="1.500"><circle cx="5" cy="5" r="1.800"/><path d="M12 8a1.500 1.500 0 1 0 .2 0c1 2 0 4-2 5" fill="currentColor"/></svg>
  <svg class="i16" viewBox="0 0 16 16" stroke-width="1.500"><rect x="5.500" y="1" width="5" height="8" rx="2.500" fill="currentColor"/><path d="M2.500 7c0 6 11 6 11 0M8 11.500V15M6 15h4"/></svg>
  <svg class="i16" viewBox="0 0 16 16" stroke-width="1.500"><rect x="1" y="3" width="14" height="10" rx="1"/><path d="M3 6h10M3 8.500h10" stroke-dasharray="2 1"/><path d="M4.500 11h7"/></svg>
  <svg class="i16" viewBox="0 0 16 16"><path d="M2 2h5v5H2zM2 9.500h5v5H2zM9.500 9.500h5v5h-5z" fill="currentColor"/><circle cx="12" cy="4.500" r="2.200" stroke-width="1.600"/></svg>
</div>
<div class="meter"><i></i></div>
<div class="mark-site d-flex align-items-center">
  <svg width="42" height="44" viewBox="0 0 42 44" stroke="none"><path d="M39 3C22 0 2 10 1 24c0 6 4 9 8 9C4 22 18 8 39 3z" fill="#3f97da"/><path d="M10 31c8 3 17-1 19-7 1-5-7-6-12-1 0-8 12-10 15-4 3 8-8 17-19 15z" fill="#69aee2"/><path d="M36 14c9 8 4 22-11 25-6 1-12 1-17 4 4-5 10-6 16-8 9-3 14-12 12-21z" fill="#6cc77c"/><path d="M5 41c8-5 14-4 20-6-5 6-14 6-20 6z" fill="#e9d25a"/></svg>
  <div><b>极光下载站</b><em>www.xz7.com</em></div>
</div>

<script>
  // Ruler scales: horizontal in characters, vertical in lines.
  const h = document.getElementById('hnums');
  for (let n = -8; n <= 46; n += 2) {
    const s = document.createElement('span'), b = document.createElement('b');
    b.textContent = (n === -8 || n === 0) ? '' : Math.abs(n);
    if (n === -8) s.className = 'edge';
    s.append(b); h.append(s);
  }
  const v = document.getElementById('vnums');
  for (let n = -4; n <= 31; n++) {
    const s = document.createElement('span');
    s.textContent = n === 0 ? '' : Math.abs(n);
    v.append(s);
  }
</script>
</body>
</html>
